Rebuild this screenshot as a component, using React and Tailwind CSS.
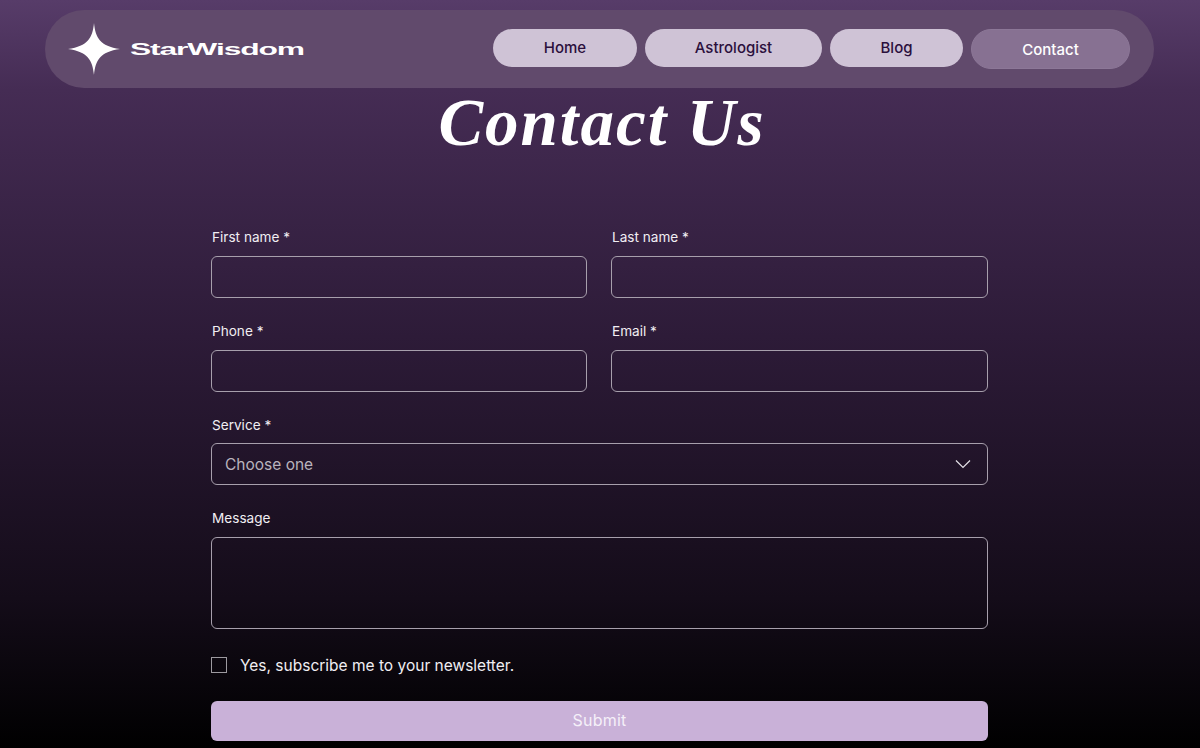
const NAV_LINKS = [
  { label: "Home", width: "w-[144px]" },
  { label: "Astrologist", width: "w-[177px]" },
  { label: "Blog", width: "w-[133px]" },
];

const inputClass = "block h-[42px] w-full rounded-[6px] border border-[#a79fac] bg-transparent";
const labelClass = "block h-[18px] pl-px text-[13.6px] leading-[18px] text-[#f1eef3]";

function Star() {
  return (
    <svg width="52" height="52" viewBox="0 0 52 52" className="shrink-0">
      <path
        d="M26 0 C27.5 15 32 23 52 26 C32 29 27.5 37 26 52 C24.500 37 20 29 0 26 C20 23 24.500 15 26 0 Z"
        fill="#ffffff"
      />
    </svg>
  );
}

function Field({ label, children, className, gap = "mb-[10px]" }) {
  return (
    <div className={className}>
      <label className={`${labelClass} ${gap}`}>{label}</label>
      {children}
    </div>
  );
}

export default function App() {
  return (
    <div className="h-[748px] w-[1200px] overflow-hidden bg-[linear-gradient(180deg,#573c69_0%,#452c54_12%,#2d1b38_45%,#140c19_80%,#000000_100%)] font-['Inter',sans-serif]">
      {/* Header */}
      <div className="pl-[45px] pr-[46px] pt-[10px]">
        <header className="flex h-[78px] items-center justify-between rounded-[39px] bg-[#614a6c] pl-[23px] pr-[24px]">
          <div className="flex items-center gap-[10px]">
            <Star />
            <span className="inline-block w-[174px] origin-left scale-x-[1.87] font-['Liberation_Sans',sans-serif] text-[17px] font-bold leading-none tracking-[-0.6px] text-white">
              StarWisdom
            </span>
          </div>
          <nav className="flex h-[40px] items-start gap-[8px]">
            {NAV_LINKS.map((link) => (
              <a
                key={link.label}
                className={`flex h-[38px] items-center justify-center rounded-[19px] bg-[#cfc3d6] text-[15px] font-medium text-[#2b0f3c] ${link.width}`}
              >
                {link.label}
              </a>
            ))}
            <a className="flex h-[40px] w-[159px] items-center justify-center rounded-[20px] border border-[#8c7797] bg-[#877192] pt-[2px] text-[15px] font-medium text-white">
              Contact
            </a>
          </nav>
        </header>
      </div>

      {/* Title */}
      <h1 className="mt-[-1px] h-[70px] pl-[4px] text-center font-['Liberation_Serif',serif] text-[67px] font-bold italic leading-[70px] tracking-[2px] text-white">
        Contact Us
      </h1>

      {/* Form */}
      <form className="ml-[211px] mt-[71px] w-[777px]">
        <div className="grid grid-cols-[376px_377px] gap-x-[24px] gap-y-[24px]">
          <Field label="First name *">
            <input className={inputClass} />
          </Field>
          <Field label="Last name *">
            <input className={inputClass} />
          </Field>
          <Field label="Phone *">
            <input className={inputClass} />
          </Field>
          <Field label="Email *">
            <input className={inputClass} />
          </Field>
        </div>

        <Field label="Service *" className="mt-[24px]" gap="mb-[9px]">
          <div className={`${inputClass} flex items-center justify-between pl-[13px] pr-[16px]`}>
            <span className="pt-[2px] text-[15.5px] text-[#b9b3bd]">Choose one</span>
            <svg width="16" height="10" viewBox="0 0 16 10" fill="none" stroke="#e4e0e7" strokeWidth="1.2">
              <path d="M1 1.500 L8 8.500 L15 1.500" />
            </svg>
          </div>
        </Field>

        <Field label="Message" className="mt-[24px]">
          <textarea className="block h-[92px] w-full resize-none rounded-[6px] border border-[#a79fac] bg-transparent" />
        </Field>

        <div className="mt-[27px] flex h-[18px] items-center gap-[13px]">
          <span className="h-[16px] w-[16px] border border-[#9d9aa0]" />
          <span className="pt-[2px] text-[15.5px] text-[#f1eef3]">Yes, subscribe me to your newsletter.</span>
        </div>

        <button
          type="button"
          className="mt-[27px] block h-[40px] w-full rounded-[6px] bg-[#c9b1d8] pb-[2px] text-center text-[16px] tracking-[0.2px] text-[#f5f0f8]"
        >
          Submit
        </button>
      </form>
    </div>
  );
}
